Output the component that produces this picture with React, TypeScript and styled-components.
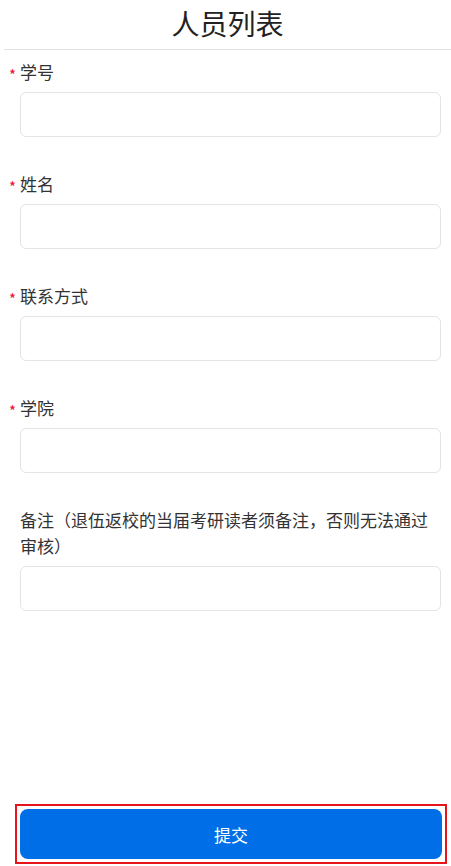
import React from 'react';
import styled, { createGlobalStyle } from 'styled-components';

const GlobalStyle = createGlobalStyle`
  html, body {
    margin: 0;
    padding: 0;
    background: #fff;
  }
  body {
    font-family: "Noto Sans CJK SC", "Noto Sans", sans-serif;
    color: #333;
  }
  * {
    box-sizing: border-box;
  }
`;

const Page = styled.div`
  display: flex;
  flex-direction: column;
  min-height: 100vh;
`;

const Header = styled.header`
  height: 50px;
  margin-left: 4px;
  border-bottom: 1px solid #e2e2e2;
  display: flex;
  align-items: center;
  justify-content: center;
`;

const Title = styled.h1`
  margin: 0 0 4px 0;
  font-size: 28px;
  font-weight: 400;
  color: #222;
  line-height: 1;
`;

const Form = styled.form`
  display: flex;
  flex-direction: column;
  padding: 9px 10px 0 20px;
`;

const Field = styled.div`
  display: flex;
  flex-direction: column;
  margin-bottom: 34px;
`;

const Label = styled.label<{ required?: boolean }>`
  position: relative;
  font-size: 17px;
  line-height: 26px;
  color: #333;
  margin-bottom: 7px;

  ${props => props.required ? `
    &::before {
      content: '*';
      position: absolute;
      left: -11px;
      top: 3px;
      line-height: 26px;
      color: #ee0a24;
      font-size: 15px;
    }
  ` : ''}
`;

const Input = styled.input`
  height: 45px;
  width: 100%;
  border: 1px solid #e4e4e4;
  border-radius: 6px;
  padding: 0 12px;
  font-size: 16px;
  font-family: inherit;
  outline: none;
  background: #fff;
`;

const Footer = styled.div`
  margin-top: auto;
  padding: 0 4px 2px 15px;
`;

const Highlight = styled.div`
  border: 2px solid #e8141c;
  padding: 3px;
`;

const SubmitButton = styled.button`
  display: block;
  width: 100%;
  height: 50px;
  border: none;
  border-radius: 8px;
  background: #006ee6;
  color: #fff;
  font-size: 17px;
  font-family: inherit;
  cursor: pointer;
`;

const fields = [
  { name: 'studentId', label: '学号', required: true },
  { name: 'name', label: '姓名', required: true },
  { name: 'contact', label: '联系方式', required: true },
  { name: 'college', label: '学院', required: true },
  { name: 'remark', label: '备注（退伍返校的当届考研读者须备注，否则无法通过审核）', required: false },
];

const App: React.FC = () => {
  return (
    <>
      <GlobalStyle />
      <Page>
        <Header>
          <Title>人员列表</Title>
        </Header>

        <Form onSubmit={e => e.preventDefault()}>
          {fields.map(f => (
            <Field key={f.name}>
              <Label htmlFor={f.name} required={f.required}>{f.label}</Label>
              <Input id={f.name} type="text" />
            </Field>
          ))}
        </Form>

        <Footer>
          <Highlight>
            <SubmitButton type="button">提交</SubmitButton>
          </Highlight>
        </Footer>
      </Page>
    </>
  );
};

export default App;
